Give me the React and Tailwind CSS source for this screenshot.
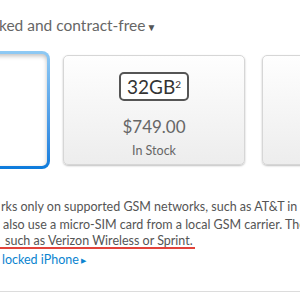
import React from 'react';

const font = { fontFamily: 'Lato, "Open Sans", sans-serif' };

function Card({ children }) {
  return (
    <div className="w-[182px] h-[110px] shrink-0 rounded-[5px] border border-[#d6d6d6] bg-gradient-to-b from-[#fefefe] to-[#ededed] shadow-[0_1px_2px_rgba(0,0,0,0.25)] flex flex-col items-center">
      {children}
    </div>
  );
}

export default function App() {
  return (
    <div className="w-[300px] h-[300px] overflow-hidden bg-white text-[#555]" style={font}>
      {/* heading, start cut off by the crop */}
      <div className="pt-[15px] h-[52px] text-[15.5px] leading-[20px] text-[#666] whitespace-nowrap -ml-[1px]">
        ked and contract-free<span className="text-[10px] text-[#555] ml-[1px] align-middle">▼</span>
      </div>

      {/* capacity cards */}
      <div className="flex gap-[17px] -ml-[136px] mt-[3px]">
        <div className="shrink-0 -m-[4px] p-[3px] rounded-[8px] bg-gradient-to-b from-[#8fcaf4] to-[#0a7bdc]">
          <div className="w-[184px] h-[112px] rounded-[5px] bg-white shadow-[inset_0_2px_4px_rgba(0,0,0,0.25)]" />
        </div>
        <Card>
          <div className="mt-[16px] w-[70px] h-[29px] rounded-[5px] border-2 border-[#555] bg-white flex items-center justify-center text-[19px] text-[#333] leading-none">
            32GB<sup className="text-[10px] relative -top-[3px]">2</sup>
          </div>
          <div className="mt-[15px] text-[17px] leading-[22px] text-[#666]">$749.00</div>
          <div className="mt-[5px] text-[12.5px] leading-[16px] text-[#666]">In Stock</div>
        </Card>
        <Card />
      </div>

      {/* description */}
      <div className="mt-[33px] flex flex-col text-[12.5px] text-[#555] whitespace-nowrap">
        <div className="h-[17.5px] leading-[17.5px] pl-[1px]">rks only on supported GSM networks, such as AT&amp;T in the</div>
        <div className="h-[17.5px] leading-[17.5px] pl-[3px]">also use a micro-SIM card from a local GSM carrier. The</div>
        <div className="h-[17.5px] flex items-start">
          <span className="h-[16px] leading-[15px] pl-[5px] pr-[2px] border-b-2 border-[#e2433b]">such as Verizon Wireless or Sprint.</span>
        </div>
        <div className="h-[17.5px] leading-[17.5px] pl-[2px] text-[#0a84d0]">
          locked iPhone<span className="text-[7px] ml-[2px] align-middle">▶</span>
        </div>
      </div>

      <div className="mt-[23px] border-t border-[#dcdcdc]" />
    </div>
  );
}
